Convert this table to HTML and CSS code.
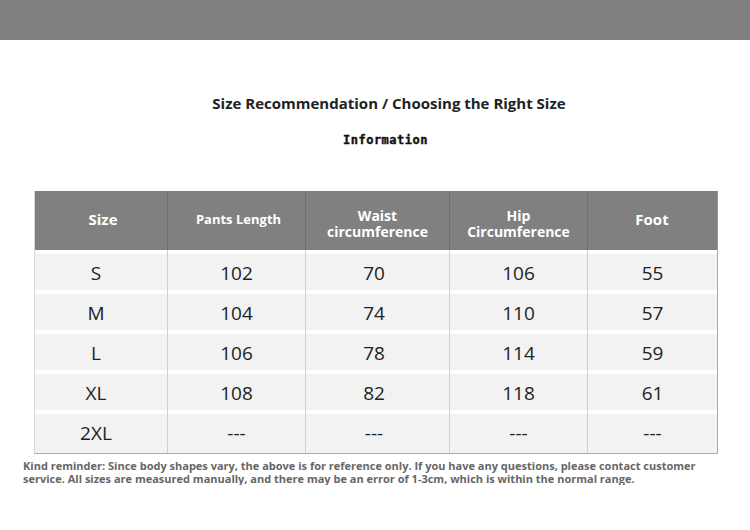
FILE: index.html
```html
<!DOCTYPE html>
<html>
<head>
<meta charset="utf-8">
<link rel="stylesheet" href="styles.css">
</head>
<body>
<div class="band"></div>
<h1 class="title">Size Recommendation / Choosing the Right Size</h1>
<div class="sub">Information</div>
<table class="chart">
  <thead>
    <tr>
      <th class="c1 big">Size</th>
      <th class="c2">Pants Length</th>
      <th class="c3 two">Waist<br>circumference</th>
      <th class="c4 two">Hip<br>Circumference</th>
      <th class="c5 big">Foot</th>
    </tr>
  </thead>
  <tbody>
    <tr><td class="k">S</td><td>102</td><td class="w">70</td><td>106</td><td>55</td></tr>
    <tr><td class="k">M</td><td>104</td><td class="w">74</td><td>110</td><td>57</td></tr>
    <tr><td class="k">L</td><td>106</td><td class="w">78</td><td>114</td><td>59</td></tr>
    <tr><td class="k">XL</td><td>108</td><td class="w">82</td><td>118</td><td>61</td></tr>
    <tr class="last"><td class="k">2XL</td><td>---</td><td class="w">---</td><td>---</td><td>---</td></tr>
  </tbody>
</table>
<p class="note">Kind reminder: Since body shapes vary, the above is for reference only. If you have any questions, please contact customer service. All sizes are measured manually, and there may be an error of 1-3cm, which is within the normal range.</p>
</body>
</html>
```
FILE: styles.css
```css
html, body {
  margin: 0;
  padding: 0;
  background: #fff;
}
body {
  width: 750px;
  font-family: "Open Sans", "Noto Sans", sans-serif;
  color: #222;
}
.band {
  height: 40px;
  background: #808080;
}
.title {
  margin: 53px 0 0;
  padding-left: 28px;
  text-align: center;
  font-size: 15px;
  line-height: 20px;
  font-weight: 700;
  color: #222;
}
.sub {
  margin-top: 20px;
  padding-left: 21px;
  text-align: center;
  font-family: "DejaVu Sans Mono", monospace;
  font-weight: 700;
  font-size: 12px;
  line-height: 15px;
  letter-spacing: 0.5px;
  color: #111;
  -webkit-text-stroke: 0.4px #111;
}
.chart {
  margin: 43px 0 0 34px;
  width: 684px;
  border-collapse: separate;
  border-spacing: 0;
  table-layout: fixed;
  border-left: 1px solid #d8d8d8;
  border-bottom: 1px solid #aaa;
}
.chart th {
  height: 56px;
  padding: 0 0 3px;
  background: #808080;
  color: #fff;
  font-weight: 700;
  font-size: 13px;
  line-height: 16px;
  text-align: center;
  border-right: 1px solid #6f6f6f;
}
.chart th.big { font-size: 15px; }
.chart th.c1 { width: 132px; text-indent: 4px; }
.chart th.two { font-size: 14px; height: 52px; padding: 7px 0 0; }
.chart th.c2 { width: 137px; text-indent: 4px; }
.chart th.c3 { width: 143px; }
.chart th.c4 { width: 137px; }
.chart th.c5 { border-right-color: #9a9a9a; text-indent: -1px; }
.chart td {
  height: 34px;
  padding: 6px 0 0;
  background: #f2f2f2;
  box-shadow: inset 0 4px 0 #fff;
  text-align: center;
  font-size: 19px;
  line-height: 34px;
  vertical-align: top;
  color: #222;
  border-right: 1px solid #cfcfcf;
}
.chart td.k { text-indent: -10px; }
.chart td.w { text-indent: -7px; }
.chart tr.last td { height: 37px; }
.chart td:last-child { border-right-color: #aaa; }
.note {
  margin: 5px 0 0 23px;
  width: 690px;
  font-size: 11px;
  line-height: 13px;
  font-weight: 700;
  color: #666;
}
```
